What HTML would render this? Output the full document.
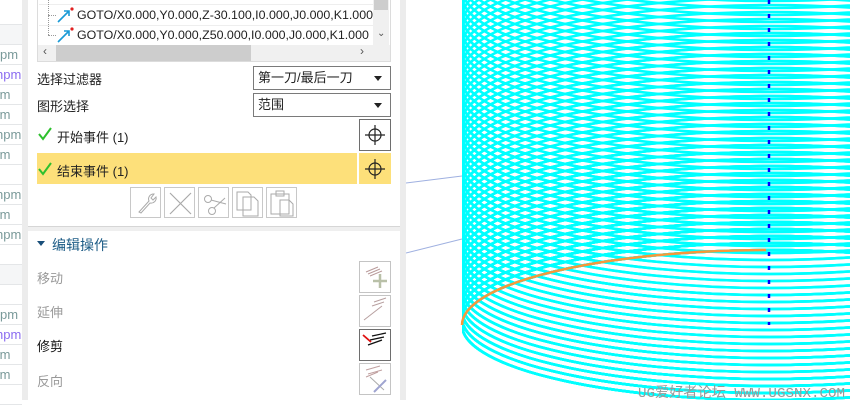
<!DOCTYPE html>
<html><head><meta charset="utf-8"><style>
*{margin:0;padding:0;box-sizing:border-box}
body{width:850px;height:400px;overflow:hidden;background:#fff;position:relative;font-family:"Liberation Sans","Noto Sans CJK SC",sans-serif;font-size:13px;color:#222}
.a{position:absolute}
.row{position:absolute;left:0;width:22px;height:20px;border-bottom:1px solid #e4e6e8;font-size:13px;line-height:20px;overflow:hidden;white-space:nowrap}
.dd{position:absolute;left:253px;width:138px;height:24px;border:1px solid #7a7a7a;background:#fff;padding-left:4px;line-height:22px}
.dd:after{content:"";position:absolute;right:8px;top:9px;border-left:4px solid transparent;border-right:4px solid transparent;border-top:5px solid #222}
.tb{position:absolute;top:187px;width:31px;height:31px;border:1px solid #c8c8c8;background:#fff}
.ib{position:absolute;left:359px;width:32px;height:32px;border:1px solid #c4c4c4;background:#fff}
.lbl{position:absolute;left:37px;color:#999}
.goto{position:absolute;left:77px;font-size:12.4px;white-space:nowrap}
</style></head><body>
<div class="a" style="left:0;top:0;width:22px;height:400px;background:#fff"></div>
<div class="row" style="top:5px"></div>
<div class="row" style="top:25px;background:#f5f6f7"></div>
<div class="row" style="top:45px;color:#7a9a9a">pm</div>
<div class="row" style="top:65px;color:#8a6cf0;left:-4px;width:26px">npm</div>
<div class="row" style="top:85px;color:#7a9a9a;left:-4px;width:26px">&nbsp;m</div>
<div class="row" style="top:105px;color:#7a9a9a;left:-4px;width:26px">&nbsp;m</div>
<div class="row" style="top:125px;color:#7a9a9a;left:-4px;width:26px">npm</div>
<div class="row" style="top:145px;color:#7a9a9a;left:-4px;width:26px">&nbsp;m</div>
<div class="row" style="top:165px"></div>
<div class="row" style="top:185px;color:#7a9a9a;left:-4px;width:26px">npm</div>
<div class="row" style="top:205px;color:#7a9a9a;left:-4px;width:26px">&nbsp;m</div>
<div class="row" style="top:225px;color:#7a9a9a;left:-4px;width:26px">npm</div>
<div class="row" style="top:245px"></div>
<div class="row" style="top:265px;background:#f5f6f7"></div>
<div class="row" style="top:285px"></div>
<div class="row" style="top:305px;color:#7a9a9a">pm</div>
<div class="row" style="top:325px;color:#8a6cf0;left:-4px;width:26px">npm</div>
<div class="row" style="top:345px;color:#7a9a9a;left:-4px;width:26px">&nbsp;m</div>
<div class="row" style="top:365px;color:#7a9a9a;left:-4px;width:26px">&nbsp;m</div>
<div class="row" style="top:385px"></div>
<div class="a" style="left:22px;top:0;width:6px;height:400px;background:#ececec"></div>
<div class="a" style="left:28px;top:0;width:372px;height:400px;background:#fff"></div>
<div class="a" style="left:28px;top:226px;width:372px;height:5px;background:#efefef;border-top:1px solid #d6d6d6"></div>
<div class="a" style="left:400px;top:0;width:6px;height:400px;background:#ececec"></div>
<div class="a" style="left:37px;top:0;width:354px;height:62px;border:1px solid #dcdcdc;border-top:none;background:#fff"></div>
<div class="a" style="left:39px;top:4px;width:335px;height:1px;background:#eee"></div>
<div class="a" style="left:39px;top:25px;width:335px;height:1px;background:#eee"></div>
<div class="a" style="left:48px;top:0;height:35px;border-left:1px dotted #999"></div>
<div class="a" style="left:48px;top:15px;width:8px;border-top:1px dotted #999"></div>
<div class="a" style="left:48px;top:35px;width:8px;border-top:1px dotted #999"></div>
<svg class="a" style="left:56px;top:6px" width="20" height="40"><path d="M2 16 L13 5 M8 5 H13 V10" stroke="#1a9ad6" stroke-width="1.6" fill="none"/><circle cx="16" cy="3" r="1.6" fill="#e02020"/><path d="M2 36 L13 25 M8 25 H13 V30" stroke="#1a9ad6" stroke-width="1.6" fill="none"/><circle cx="16" cy="23" r="1.6" fill="#e02020"/></svg>
<div class="goto" style="top:8px">GOTO/X0.000,Y0.000,Z-30.100,I0.000,J0.000,K1.000</div>
<div class="goto" style="top:28px">GOTO/X0.000,Y0.000,Z50.000,I0.000,J0.000,K1.000</div>
<div class="a" style="left:373px;top:0;width:16px;height:45px;background:#f0f0f0"></div>
<div class="a" style="left:374px;top:0;width:14px;height:10px;background:#cdcdcd"></div>
<div class="a" style="left:377px;top:28px;font-size:10px;color:#555">⌄</div>
<div class="a" style="left:38px;top:45px;width:352px;height:16px;background:#f0f0f0"></div>
<div class="a" style="left:56px;top:45px;width:195px;height:16px;background:#cdcdcd"></div>
<div class="a" style="left:43px;top:44px;font-size:12px;color:#555">‹</div>
<div class="a" style="left:360px;top:44px;font-size:12px;color:#555">›</div>
<div class="a" style="left:37px;top:69px">选择过滤器</div>
<div class="dd" style="top:66px">第一刀/最后一刀</div>
<div class="a" style="left:37px;top:96px">图形选择</div>
<div class="dd" style="top:93px">范围</div>
<svg class="a" style="left:37px;top:126px" width="16" height="16"><path d="M2 8 L6 13 L14 2" stroke="#2ec02e" stroke-width="2" fill="none"/></svg>
<div class="a" style="left:57px;top:127px">开始事件 (1)</div>
<div class="a" style="left:359px;top:119px;width:32px;height:32px;border:1px solid #6e6e6e;background:#fff"></div>
<svg class="a" style="left:365px;top:125px" width="20" height="20"><circle cx="10" cy="10" r="6" stroke="#222" fill="none" stroke-width="1.2"/><path d="M0 10H20M10 0V20" stroke="#222" stroke-width="1.2"/></svg>
<div class="a" style="left:37px;top:153px;width:320px;height:31px;background:#fde07a"></div>
<div class="a" style="left:359px;top:153px;width:32px;height:31px;background:#fde07a"></div>
<svg class="a" style="left:37px;top:161px" width="16" height="16"><path d="M2 8 L6 13 L14 2" stroke="#2ec02e" stroke-width="2" fill="none"/></svg>
<div class="a" style="left:57px;top:161px">结束事件 (1)</div>
<svg class="a" style="left:365px;top:159px" width="20" height="20"><circle cx="10" cy="10" r="6" stroke="#222" fill="none" stroke-width="1.2"/><path d="M0 10H20M10 0V20" stroke="#222" stroke-width="1.2"/></svg>
<div class="tb" style="left:130px"><svg width="31" height="31"><path d="M8 24 L18 13 A5 5 0 0 1 23 6 L20 10 L22 12 L25 9 A5 5 0 0 1 19 15 L10 25 Z" stroke="#aaa" fill="none"/></svg></div>
<div class="tb" style="left:164px"><svg width="31" height="31"><path d="M5 5L26 26M26 5L5 26" stroke="#aaa" stroke-width="1.2"/></svg></div>
<div class="tb" style="left:198px"><svg width="31" height="31"><circle cx="9" cy="11" r="3.5" stroke="#aaa" fill="none"/><circle cx="13" cy="23" r="3.5" stroke="#aaa" fill="none"/><path d="M12 12L27 16M15 20L26 10" stroke="#aaa"/></svg></div>
<div class="tb" style="left:232px"><svg width="31" height="31"><path d="M4 4H15L18 7V22H4Z M10 9H21L25 13V28H10Z" stroke="#aaa" fill="#fff"/></svg></div>
<div class="tb" style="left:266px"><svg width="31" height="31"><path d="M4 6H22V26H4Z M9 3H17V8H9Z M13 12H22L26 16V28H13Z" stroke="#aaa" fill="#fff"/></svg></div>
<div class="a" style="left:37px;top:241px;border-left:4px solid transparent;border-right:4px solid transparent;border-top:5px solid #1a4f7a"></div>
<div class="a" style="left:52px;top:235px;font-size:14px;color:#1d5c86">编辑操作</div>
<div class="lbl" style="top:268px">移动</div>
<div class="lbl" style="top:302px">延伸</div>
<div class="lbl" style="top:336px;color:#111">修剪</div>
<div class="lbl" style="top:371px">反向</div>
<div class="ib" style="top:261px"><svg width="30" height="30"><path d="M6 10L18 5M8 12L20 7M10 14L22 9" stroke="#b89a9a" stroke-width="1"/><path d="M20 12V26M13 19H27" stroke="#b9c0a8" stroke-width="2.5"/></svg></div>
<div class="ib" style="top:295px"><svg width="30" height="30"><path d="M14 6L26 2M12 10L24 6M4 24L22 10" stroke="#b8a0a0" stroke-width="1"/></svg></div>
<div class="ib" style="top:329px;border-color:#6e6e6e"><svg width="30" height="30"><path d="M12 6L26 3M10 10L24 7M8 15L22 10" stroke="#111" stroke-width="1.3"/><path d="M3 5L11 12" stroke="#e01010" stroke-width="1.8"/></svg></div>
<div class="ib" style="top:363px"><svg width="30" height="30"><path d="M6 6L20 2M8 10L22 6M6 13L18 8" stroke="#c0a0a0"/><path d="M10 13L24 26" stroke="#aaa"/><path d="M14 28L26 16" stroke="#9fa4d0" stroke-width="2"/></svg></div>
<svg class="a" style="left:406px;top:0" width="444" height="400" viewBox="406 0 444 400">
<defs><clipPath id="c"><rect x="462" y="0" width="400" height="400"/></clipPath>
<ellipse id="e" cx="770" cy="325" rx="308" ry="75" fill="none" stroke="#00ffff" stroke-width="2.6"/></defs>
<line x1="406" y1="183" x2="462" y2="176" stroke="#9fb0e0"/>
<line x1="406" y1="253" x2="462" y2="239" stroke="#9fb0e0"/>
<g clip-path="url(#c)">
<g id="g1"><use href="#e"/><use href="#e" y="-7"/></g>
<g id="g2"><use href="#g1"/><use href="#g1" y="-14"/></g>
<g id="g3"><use href="#g2"/><use href="#g2" y="-28"/></g>
<g id="g4"><use href="#g3"/><use href="#g3" y="-56"/></g>
<g id="g5"><use href="#g4"/><use href="#g4" y="-112"/></g>
<g id="g6"><use href="#g5"/><use href="#g5" y="-224"/></g>
</g>
<line x1="769" y1="0" x2="769" y2="325" stroke="#0000ff" stroke-width="2.5" stroke-dasharray="4 10"/>
<path d="M462 325 A308 75 0 0 1 766 250" stroke="#f7983a" stroke-width="2.5" fill="none"/>
<text x="638" y="397" font-family="Liberation Mono,Noto Sans CJK SC,monospace" font-size="14" fill="#999" textLength="207" lengthAdjust="spacingAndGlyphs">UG爱好者论坛 WWW.UGSNX.COM</text>
</svg>
</body></html>
